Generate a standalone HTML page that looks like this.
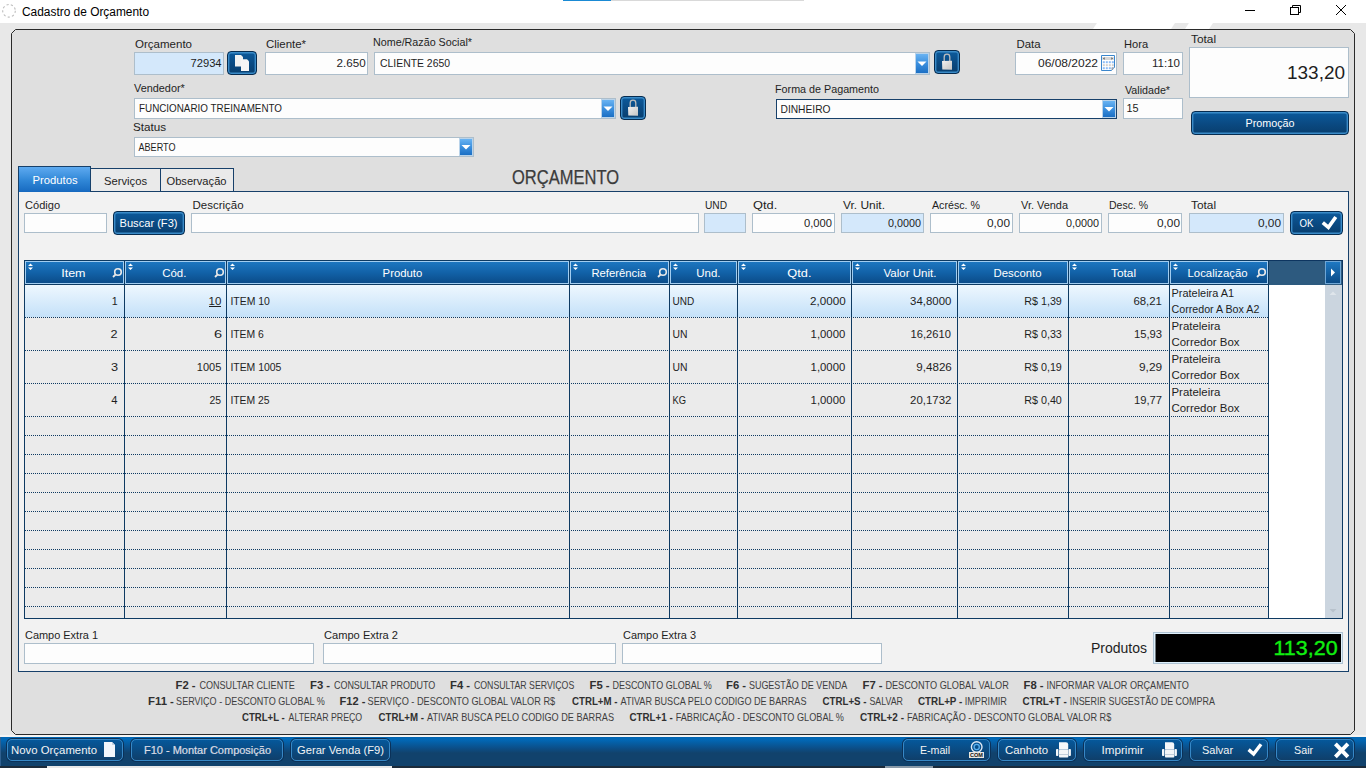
<!DOCTYPE html>
<html><head><meta charset="utf-8"><title>Cadastro de Orçamento</title>
<style>
html,body{margin:0;padding:0;width:1366px;height:768px;overflow:hidden;background:#e8e8e8;font-family:"Liberation Sans", sans-serif}
#s>div{position:absolute}
svg{position:absolute;left:0;top:0}
</style></head><body>
<div id="s">
<div style="left:0px;top:0px;width:1366px;height:23px;background:#ffffff"></div>
<div style="left:0px;top:23px;width:1366px;height:714px;background:#e8e8e8"></div>
<div style="left:1095px;top:23px;width:78px;height:6px;background:#fff;transform:skewX(-33deg)"></div>
<div style="left:1187px;top:23px;width:24px;height:6px;background:#fff;transform:skewX(-33deg)"></div>
<div style="left:563px;top:0px;width:48px;height:1px;background:#1a8ad4"></div>
<div style="left:611px;top:0px;width:193px;height:1px;background:#d9d9d9"></div>
<div style="left:0;top:0;width:1366px;height:768px"><svg width="1366" height="768" style="position:absolute;left:0;top:0"><path d="M11.5 33.5L15.5 29.5H1350.5L1354.5 33.5V730.5L1350.5 734.5H15.5L11.5 730.5Z" fill="#dfdfdf" stroke="#2a2a2a" stroke-width="1"/></svg></div>
<div style="left:134px;top:52px;width:90px;height:23px;background:#d4e8fb;border:1px solid #adbecb;box-sizing:border-box"></div>
<div style="left:227px;top:51px;width:30px;height:24px;background:linear-gradient(#0c5a9c,#0a487f 60%,#083e6e);border:1px solid #062c50;box-shadow:inset 0 0 0 1.4px #3a8bc8;border-radius:4px;box-sizing:border-box"></div>
<div style="left:265px;top:52px;width:103px;height:23px;background:#fdfdfd;border:1px solid #adbecb;box-sizing:border-box"></div>
<div style="left:374px;top:52px;width:556px;height:23px;background:#fdfdfd;border:1px solid #adbecb;box-sizing:border-box"></div>
<div style="left:915px;top:53px;width:14px;height:21px;background:linear-gradient(#69b3f2,#3b8fde 50%,#1b6fc4);border:1px solid #b9d3ea;box-sizing:border-box"></div>
<div style="left:934px;top:50px;width:26px;height:24px;background:linear-gradient(#0c5a9c,#0a487f 60%,#083e6e);border:1px solid #062c50;box-shadow:inset 0 0 0 1.4px #3a8bc8;border-radius:4px;box-sizing:border-box"></div>
<div style="left:1015px;top:52px;width:102px;height:23px;background:#fdfdfd;border:1px solid #adbecb;box-sizing:border-box"></div>
<div style="left:1123px;top:52px;width:60px;height:23px;background:#fdfdfd;border:1px solid #adbecb;box-sizing:border-box"></div>
<div style="left:1189px;top:47px;width:160px;height:51px;background:#fdfdfd;border:1px solid #adbecb;box-sizing:border-box"></div>
<div style="left:1191px;top:111px;width:158px;height:24px;background:linear-gradient(#0c5a9c,#0a487f 60%,#083e6e);border:1px solid #062c50;box-shadow:inset 0 0 0 1.4px #3a8bc8;border-radius:4px;box-sizing:border-box"></div>
<div style="left:134px;top:98px;width:482px;height:21px;background:#fdfdfd;border:1px solid #adbecb;box-sizing:border-box"></div>
<div style="left:601px;top:99px;width:14px;height:19px;background:linear-gradient(#69b3f2,#3b8fde 50%,#1b6fc4);border:1px solid #b9d3ea;box-sizing:border-box"></div>
<div style="left:620px;top:96px;width:26px;height:24px;background:linear-gradient(#0c5a9c,#0a487f 60%,#083e6e);border:1px solid #062c50;box-shadow:inset 0 0 0 1.4px #3a8bc8;border-radius:4px;box-sizing:border-box"></div>
<div style="left:776px;top:99px;width:341px;height:20px;background:#fdfdfd;border:1px solid #17406a;box-sizing:border-box"></div>
<div style="left:1102px;top:100px;width:14px;height:18px;background:linear-gradient(#69b3f2,#3b8fde 50%,#1b6fc4);border:1px solid #b9d3ea;box-sizing:border-box"></div>
<div style="left:1123px;top:98px;width:60px;height:21px;background:#fdfdfd;border:1px solid #adbecb;box-sizing:border-box"></div>
<div style="left:134px;top:137px;width:340px;height:20px;background:#fdfdfd;border:1px solid #adbecb;box-sizing:border-box"></div>
<div style="left:459px;top:138px;width:14px;height:18px;background:linear-gradient(#69b3f2,#3b8fde 50%,#1b6fc4);border:1px solid #b9d3ea;box-sizing:border-box"></div>
<div style="left:18px;top:191px;width:1331px;height:481px;background:#f2f2f2;border:1px solid #17406a;box-sizing:border-box"></div>
<div style="left:18px;top:166px;width:73px;height:26px;background:linear-gradient(#5eaaf0,#2f86d6 55%,#176ac0);border:1px solid #17406a;border-bottom:none;box-sizing:border-box"></div>
<div style="left:90px;top:168px;width:71px;height:24px;background:#eaeaea;border:1px solid #17406a;box-sizing:border-box"></div>
<div style="left:160px;top:168px;width:74px;height:24px;background:#eaeaea;border:1px solid #17406a;box-sizing:border-box"></div>
<div style="left:19px;top:191px;width:71px;height:1px;background:#176ac0"></div>
<div style="left:24px;top:213px;width:83px;height:20px;background:#fdfdfd;border:1px solid #adbecb;box-sizing:border-box"></div>
<div style="left:113px;top:211px;width:72px;height:24px;background:linear-gradient(#0c5a9c,#0a487f 60%,#083e6e);border:1px solid #062c50;box-shadow:inset 0 0 0 1.4px #3a8bc8;border-radius:4px;box-sizing:border-box"></div>
<div style="left:191px;top:213px;width:508px;height:20px;background:#fdfdfd;border:1px solid #adbecb;box-sizing:border-box"></div>
<div style="left:704px;top:213px;width:42px;height:20px;background:#d4e8fb;border:1px solid #adbecb;box-sizing:border-box"></div>
<div style="left:752px;top:213px;width:83px;height:20px;background:#fdfdfd;border:1px solid #adbecb;box-sizing:border-box"></div>
<div style="left:841px;top:213px;width:83px;height:20px;background:#d4e8fb;border:1px solid #adbecb;box-sizing:border-box"></div>
<div style="left:930px;top:213px;width:83px;height:20px;background:#fdfdfd;border:1px solid #adbecb;box-sizing:border-box"></div>
<div style="left:1019px;top:213px;width:83px;height:20px;background:#fdfdfd;border:1px solid #adbecb;box-sizing:border-box"></div>
<div style="left:1108px;top:213px;width:74px;height:20px;background:#fdfdfd;border:1px solid #adbecb;box-sizing:border-box"></div>
<div style="left:1189px;top:213px;width:95px;height:20px;background:#d4e8fb;border:1px solid #adbecb;box-sizing:border-box"></div>
<div style="left:1290px;top:211px;width:53px;height:24px;background:linear-gradient(#0c5a9c,#0a487f 60%,#083e6e);border:1px solid #062c50;box-shadow:inset 0 0 0 1.4px #3a8bc8;border-radius:4px;box-sizing:border-box"></div>
<div style="left:24px;top:260px;width:1319px;height:359px;background:#ebebeb;border:1px solid #0e3a62;box-sizing:border-box"></div>
<div style="left:24px;top:260px;width:1319px;height:25px;background:#2d5a7f;border:1px solid #0d3560;border-bottom:none;box-sizing:border-box"></div>
<div style="left:25px;top:285px;width:1243px;height:32px;background:linear-gradient(#eef7fe,#c4e1f9)"></div>
<div style="left:1269px;top:285px;width:56px;height:333px;background:#ffffff"></div>
<div style="left:1325px;top:285px;width:17px;height:333px;background:#cbd5df"></div>
<div style="left:25px;top:317px;width:1243px;height:0;border-top:1px dotted #0e3a62"></div>
<div style="left:25px;top:350px;width:1243px;height:0;border-top:1px dotted #0e3a62"></div>
<div style="left:25px;top:383px;width:1243px;height:0;border-top:1px dotted #0e3a62"></div>
<div style="left:25px;top:416px;width:1243px;height:0;border-top:1px dotted #0e3a62"></div>
<div style="left:25px;top:435px;width:1243px;height:0;border-top:1px dotted #0e3a62"></div>
<div style="left:25px;top:454px;width:1243px;height:0;border-top:1px dotted #0e3a62"></div>
<div style="left:25px;top:473px;width:1243px;height:0;border-top:1px dotted #0e3a62"></div>
<div style="left:25px;top:492px;width:1243px;height:0;border-top:1px dotted #0e3a62"></div>
<div style="left:25px;top:511px;width:1243px;height:0;border-top:1px dotted #0e3a62"></div>
<div style="left:25px;top:530px;width:1243px;height:0;border-top:1px dotted #0e3a62"></div>
<div style="left:25px;top:549px;width:1243px;height:0;border-top:1px dotted #0e3a62"></div>
<div style="left:25px;top:568px;width:1243px;height:0;border-top:1px dotted #0e3a62"></div>
<div style="left:25px;top:587px;width:1243px;height:0;border-top:1px dotted #0e3a62"></div>
<div style="left:25px;top:606px;width:1243px;height:0;border-top:1px dotted #0e3a62"></div>
<div style="left:124px;top:285px;width:1px;height:334px;background:#0e3a62"></div>
<div style="left:226px;top:285px;width:1px;height:334px;background:#0e3a62"></div>
<div style="left:569px;top:285px;width:1px;height:334px;background:#0e3a62"></div>
<div style="left:669px;top:285px;width:1px;height:334px;background:#0e3a62"></div>
<div style="left:737px;top:285px;width:1px;height:334px;background:#0e3a62"></div>
<div style="left:851px;top:285px;width:1px;height:334px;background:#0e3a62"></div>
<div style="left:957px;top:285px;width:1px;height:334px;background:#0e3a62"></div>
<div style="left:1068px;top:285px;width:1px;height:334px;background:#0e3a62"></div>
<div style="left:1169px;top:285px;width:1px;height:334px;background:#0e3a62"></div>
<div style="left:1268px;top:285px;width:1px;height:334px;background:#0e3a62"></div>
<div style="left:24px;top:260px;width:101px;height:25px;background:linear-gradient(#1e78c2,#1262a8 50%,#0a4a86);border:1px solid #0d3a62;box-shadow:inset 0 0 0 1px #a2cdf0;box-sizing:border-box"></div>
<div style="left:124px;top:260px;width:103px;height:25px;background:linear-gradient(#1e78c2,#1262a8 50%,#0a4a86);border:1px solid #0d3a62;box-shadow:inset 0 0 0 1px #a2cdf0;box-sizing:border-box"></div>
<div style="left:226px;top:260px;width:344px;height:25px;background:linear-gradient(#1e78c2,#1262a8 50%,#0a4a86);border:1px solid #0d3a62;box-shadow:inset 0 0 0 1px #a2cdf0;box-sizing:border-box"></div>
<div style="left:569px;top:260px;width:101px;height:25px;background:linear-gradient(#1e78c2,#1262a8 50%,#0a4a86);border:1px solid #0d3a62;box-shadow:inset 0 0 0 1px #a2cdf0;box-sizing:border-box"></div>
<div style="left:669px;top:260px;width:69px;height:25px;background:linear-gradient(#1e78c2,#1262a8 50%,#0a4a86);border:1px solid #0d3a62;box-shadow:inset 0 0 0 1px #a2cdf0;box-sizing:border-box"></div>
<div style="left:737px;top:260px;width:115px;height:25px;background:linear-gradient(#1e78c2,#1262a8 50%,#0a4a86);border:1px solid #0d3a62;box-shadow:inset 0 0 0 1px #a2cdf0;box-sizing:border-box"></div>
<div style="left:851px;top:260px;width:107px;height:25px;background:linear-gradient(#1e78c2,#1262a8 50%,#0a4a86);border:1px solid #0d3a62;box-shadow:inset 0 0 0 1px #a2cdf0;box-sizing:border-box"></div>
<div style="left:957px;top:260px;width:112px;height:25px;background:linear-gradient(#1e78c2,#1262a8 50%,#0a4a86);border:1px solid #0d3a62;box-shadow:inset 0 0 0 1px #a2cdf0;box-sizing:border-box"></div>
<div style="left:1068px;top:260px;width:102px;height:25px;background:linear-gradient(#1e78c2,#1262a8 50%,#0a4a86);border:1px solid #0d3a62;box-shadow:inset 0 0 0 1px #a2cdf0;box-sizing:border-box"></div>
<div style="left:1169px;top:260px;width:100px;height:25px;background:linear-gradient(#1e78c2,#1262a8 50%,#0a4a86);border:1px solid #0d3a62;box-shadow:inset 0 0 0 1px #a2cdf0;box-sizing:border-box"></div>
<div style="left:1325px;top:261px;width:16px;height:23px;background:linear-gradient(#1e78c2,#0a4a86);border:1px solid #6ea6d6;box-sizing:border-box"></div>
<div style="left:24px;top:643px;width:290px;height:21px;background:#fdfdfd;border:1px solid #adbecb;box-sizing:border-box"></div>
<div style="left:323px;top:643px;width:293px;height:21px;background:#fdfdfd;border:1px solid #adbecb;box-sizing:border-box"></div>
<div style="left:622px;top:643px;width:260px;height:21px;background:#fdfdfd;border:1px solid #adbecb;box-sizing:border-box"></div>
<div style="left:1153px;top:632px;width:190px;height:32px;background:#000;border:1px solid #afc3d3;box-shadow:inset 1.5px 1px 0 0 #def0fc,inset -1px -1px 0 0 #def0fc;box-sizing:border-box"></div>
<div style="left:0px;top:735px;width:1366px;height:2px;background:#f4f4f4"></div>
<div style="left:0px;top:737px;width:1366px;height:29px;background:linear-gradient(#0267b4 0px,#0267b4 3px,#0b4f89 11px,#11426c 16px,#11426c 29px)"></div>
<div style="left:0px;top:766px;width:1366px;height:2px;background:#1c2b3a"></div>
<div style="left:0px;top:737px;width:1px;height:29px;background:#2f6090"></div>
<div style="left:47px;top:766px;width:345px;height:2px;background:#e8e8e8"></div>
<div style="left:885px;top:766px;width:48px;height:2px;background:#8a9aa8"></div>
<div style="left:7px;top:739px;width:116px;height:22px;background:linear-gradient(#05589b,#0a4c84 45%,#0f3f6a);border:1px solid #3788c6;box-shadow:0 0 0 1px #0b3158;border-radius:5px;box-sizing:border-box"></div>
<div style="left:131px;top:739px;width:152px;height:22px;background:linear-gradient(#05589b,#0a4c84 45%,#0f3f6a);border:1px solid #3788c6;box-shadow:0 0 0 1px #0b3158;border-radius:5px;box-sizing:border-box"></div>
<div style="left:291px;top:739px;width:99px;height:22px;background:linear-gradient(#05589b,#0a4c84 45%,#0f3f6a);border:1px solid #3788c6;box-shadow:0 0 0 1px #0b3158;border-radius:5px;box-sizing:border-box"></div>
<div style="left:903px;top:739px;width:87px;height:22px;background:linear-gradient(#05589b,#0a4c84 45%,#0f3f6a);border:1px solid #3788c6;box-shadow:0 0 0 1px #0b3158;border-radius:5px;box-sizing:border-box"></div>
<div style="left:998px;top:739px;width:78px;height:22px;background:linear-gradient(#05589b,#0a4c84 45%,#0f3f6a);border:1px solid #3788c6;box-shadow:0 0 0 1px #0b3158;border-radius:5px;box-sizing:border-box"></div>
<div style="left:1084px;top:739px;width:98px;height:22px;background:linear-gradient(#05589b,#0a4c84 45%,#0f3f6a);border:1px solid #3788c6;box-shadow:0 0 0 1px #0b3158;border-radius:5px;box-sizing:border-box"></div>
<div style="left:1190px;top:739px;width:78px;height:22px;background:linear-gradient(#05589b,#0a4c84 45%,#0f3f6a);border:1px solid #3788c6;box-shadow:0 0 0 1px #0b3158;border-radius:5px;box-sizing:border-box"></div>
<div style="left:1276px;top:739px;width:78px;height:22px;background:linear-gradient(#05589b,#0a4c84 45%,#0f3f6a);border:1px solid #3788c6;box-shadow:0 0 0 1px #0b3158;border-radius:5px;box-sizing:border-box"></div>
</div>
<svg width="1366" height="768" viewBox="0 0 1366 768" font-family='"Liberation Sans", sans-serif'>
<defs><linearGradient id="lockg" x1="0" y1="0" x2="1" y2="1"><stop offset="0" stop-color="#f0f0f0"/><stop offset="1" stop-color="#c4c4c4"/></linearGradient></defs>
<circle cx="9" cy="10.8" r="6.3" fill="none" stroke="#bdbdbd" stroke-width="1.1" stroke-dasharray="2.2 2.2"/>
<path d="M1245 10.5H1255" stroke="#000" stroke-width="1"/>
<rect x="1290.5" y="7.5" width="8" height="7" fill="none" stroke="#000"/>
<path d="M1292.5 7.5V5.5H1300.5V12.5H1298.5" fill="none" stroke="#000"/>
<path d="M1336 5L1346 15M1346 5L1336 15" stroke="#000" stroke-width="1"/>
<path d="M235 55h6l2 2v9.5h-8z" fill="#f2f2f2"/><path d="M241 59.3h6l2 2v9.6h-8z" fill="#f6f6f6"/>
<path d="M917.5 61.5L926.5 61.5L922.0 66.0Z" fill="#fff"/>
<path d="M944.2 61.5V57a2.8 2.8 0 0 1 5.6 0V61.5" fill="none" stroke="#bdbdbd" stroke-width="1.3"/>
<path d="M942 61L952 60.8V69.8L942.3 69.5Z" fill="url(#lockg)"/>
<path d="M1101.5 55.5H1114.5V67.5L1111.5 70.5H1101.5Z" fill="#fff" stroke="#3a86cc" stroke-width="1"/>
<rect x="1102.2" y="57" width="11.6" height="3" fill="#d6d6d6"/><path d="M1103 58.5L1104.6 57.2V59.8Z" fill="#555"/><path d="M1113 58.5L1111.4 57.2V59.8Z" fill="#555"/>
<rect x="1102.8" y="61.2" width="2" height="2" fill="#8cbcf6"/>
<rect x="1105.8" y="61.2" width="2" height="2" fill="#8cbcf6"/>
<rect x="1108.8" y="61.2" width="2" height="2" fill="#8cbcf6"/>
<rect x="1111.8" y="61.2" width="2" height="2" fill="#8cbcf6"/>
<rect x="1102.8" y="64.2" width="2" height="2" fill="#d0d0d0"/>
<rect x="1105.8" y="64.2" width="2" height="2" fill="#d0d0d0"/>
<rect x="1108.8" y="64.2" width="2" height="2" fill="#d0d0d0"/>
<rect x="1111.8" y="64.2" width="2" height="2" fill="#d0d0d0"/>
<rect x="1102.8" y="67.2" width="2" height="2" fill="#8cbcf6"/>
<rect x="1105.8" y="67.2" width="2" height="2" fill="#8cbcf6"/>
<rect x="1108.8" y="67.2" width="2" height="2" fill="#8cbcf6"/>
<rect x="1111.8" y="67.2" width="2" height="2" fill="#8cbcf6"/>
<path d="M1114.5 67.5L1111.5 70.5V67.5Z" fill="#a8a8a8"/>
<path d="M603.5 106.5L612.5 106.5L608.0 111.0Z" fill="#fff"/>
<path d="M630.2 107.5V103a2.8 2.8 0 0 1 5.6 0V107.5" fill="none" stroke="#bdbdbd" stroke-width="1.3"/>
<path d="M628 107L638 106.8V115.8L628.3 115.5Z" fill="url(#lockg)"/>
<path d="M1104.5 107.0L1113.5 107.0L1109.0 111.5Z" fill="#fff"/>
<path d="M461.5 145.0L470.5 145.0L466.0 149.5Z" fill="#fff"/>
<path d="M1322.8 222.6L1328.4 227.4L1335.8 217" fill="none" stroke="#fff" stroke-width="3.6"/>
<path d="M1329.5 295L1333 291.5L1336.5 295Z" fill="#dfe5eb"/>
<path d="M1329.5 609L1333 612.5L1336.5 609Z" fill="#b8c2cc"/>
<path d="M28 266L30.5 263.5L33 266ZM28 267.5L30.5 270L33 267.5Z" fill="#ffffff"/>
<circle cx="118" cy="272" r="3.3" fill="none" stroke="#e8e8e8" stroke-width="1.6"/><path d="M115.7 274.3L113 277" stroke="#e8e8e8" stroke-width="1.8"/>
<path d="M128 266L130.5 263.5L133 266ZM128 267.5L130.5 270L133 267.5Z" fill="#ffffff"/>
<circle cx="220" cy="272" r="3.3" fill="none" stroke="#e8e8e8" stroke-width="1.6"/><path d="M217.7 274.3L215 277" stroke="#e8e8e8" stroke-width="1.8"/>
<path d="M230 266L232.5 263.5L235 266ZM230 267.5L232.5 270L235 267.5Z" fill="#ffffff"/>
<path d="M573 266L575.5 263.5L578 266ZM573 267.5L575.5 270L578 267.5Z" fill="#ffffff"/>
<circle cx="663" cy="272" r="3.3" fill="none" stroke="#e8e8e8" stroke-width="1.6"/><path d="M660.7 274.3L658 277" stroke="#e8e8e8" stroke-width="1.8"/>
<path d="M673 266L675.5 263.5L678 266ZM673 267.5L675.5 270L678 267.5Z" fill="#ffffff"/>
<path d="M741 266L743.5 263.5L746 266ZM741 267.5L743.5 270L746 267.5Z" fill="#ffffff"/>
<path d="M855 266L857.5 263.5L860 266ZM855 267.5L857.5 270L860 267.5Z" fill="#ffffff"/>
<path d="M961 266L963.5 263.5L966 266ZM961 267.5L963.5 270L966 267.5Z" fill="#ffffff"/>
<path d="M1072 266L1074.5 263.5L1077 266ZM1072 267.5L1074.5 270L1077 267.5Z" fill="#ffffff"/>
<path d="M1173 266L1175.5 263.5L1178 266ZM1173 267.5L1175.5 270L1178 267.5Z" fill="#ffffff"/>
<circle cx="1262" cy="272" r="3.3" fill="none" stroke="#e8e8e8" stroke-width="1.6"/><path d="M1259.7 274.3L1257 277" stroke="#e8e8e8" stroke-width="1.8"/>
<path d="M1331 268.5L1335 272.5L1331 276.5Z" fill="#ffffff"/>
<path d="M209 306.5H221" stroke="#1e1e1e" stroke-width="1"/>
<path d="M104 742h8l3 3v12h-11z" fill="#f2f6fb"/><path d="M112 742v3h3" fill="#c7d4e2"/>
<circle cx="976.7" cy="747" r="5.3" fill="none" stroke="#dfe8f3" stroke-width="1.4"/><circle cx="976.7" cy="747" r="2.6" fill="none" stroke="#5ab0f0" stroke-width="1.3"/><rect x="969" y="752" width="15" height="6" fill="#ebe7e3"/><text x="976.5" y="757.4" font-size="6" font-weight="bold" fill="#111" text-anchor="middle" textLength="13" lengthAdjust="spacingAndGlyphs">COM</text>
<path d="M1059 742.2h7a2.2 2.2 0 0 1 2.2 2.2V749.5h-9.2z" fill="#f6f8fa"/><rect x="1056" y="749" width="2.4" height="7" rx="0.8" fill="#f6f8fa"/><rect x="1068.5" y="749" width="2.4" height="7" rx="0.8" fill="#f6f8fa"/><rect x="1059" y="749.6" width="9.3" height="8" rx="0.8" fill="#f4f6f8"/><rect x="1059" y="754" width="9.3" height="1" fill="#c3cfdb"/>
<path d="M1165 742.2h7a2.2 2.2 0 0 1 2.2 2.2V749.5h-9.2z" fill="#f6f8fa"/><rect x="1162" y="749" width="2.4" height="7" rx="0.8" fill="#f6f8fa"/><rect x="1174.5" y="749" width="2.4" height="7" rx="0.8" fill="#f6f8fa"/><rect x="1165" y="749.6" width="9.3" height="8" rx="0.8" fill="#f4f6f8"/><rect x="1165" y="754" width="9.3" height="1" fill="#c3cfdb"/>
<path d="M1248.6 749.6L1253.6 754L1261 744.3" fill="none" stroke="#fff" stroke-width="3.4"/>
<path d="M1335.4 743.8L1347.9 756.8M1347.9 743.8L1335.4 756.8" stroke="#fff" stroke-width="3.9"/>
<text x="22.00" y="16" font-size="12" fill="#000" textLength="127.02" lengthAdjust="spacingAndGlyphs">Cadastro de Orçamento</text>
<text x="135.00" y="48" font-size="11" fill="#1e1e1e" textLength="57.02" lengthAdjust="spacingAndGlyphs">Orçamento</text>
<text x="190.50" y="67" font-size="11" fill="#1e1e1e" textLength="31.09" lengthAdjust="spacingAndGlyphs">72934</text>
<text x="266.00" y="48" font-size="11" fill="#1e1e1e" textLength="40.03" lengthAdjust="spacingAndGlyphs">Cliente*</text>
<text x="336.50" y="67" font-size="11" fill="#1e1e1e" textLength="29.10" lengthAdjust="spacingAndGlyphs">2.650</text>
<text x="373.00" y="46" font-size="11" fill="#1e1e1e" textLength="99.03" lengthAdjust="spacingAndGlyphs">Nome/Razão Social*</text>
<text x="380.00" y="67" font-size="11" fill="#1e1e1e" textLength="70.01" lengthAdjust="spacingAndGlyphs">CLIENTE 2650</text>
<text x="1016.50" y="48" font-size="11" fill="#1e1e1e" textLength="24.05" lengthAdjust="spacingAndGlyphs">Data</text>
<text x="1038.00" y="67" font-size="11" fill="#1e1e1e" textLength="60.02" lengthAdjust="spacingAndGlyphs">06/08/2022</text>
<text x="1124.00" y="48" font-size="11" fill="#1e1e1e" textLength="24.07" lengthAdjust="spacingAndGlyphs">Hora</text>
<text x="1152.00" y="67" font-size="11" fill="#1e1e1e" textLength="28.04" lengthAdjust="spacingAndGlyphs">11:10</text>
<text x="1191.00" y="43" font-size="11" fill="#1e1e1e" textLength="25.09" lengthAdjust="spacingAndGlyphs">Total</text>
<text x="1287.00" y="78.7" font-size="19" fill="#1e1e1e" textLength="58.07" lengthAdjust="spacingAndGlyphs">133,20</text>
<text x="1245.50" y="127" font-size="11" fill="#ffffff" textLength="49.05" lengthAdjust="spacingAndGlyphs">Promoção</text>
<text x="134.00" y="92" font-size="11" fill="#1e1e1e" textLength="50.81" lengthAdjust="spacingAndGlyphs">Vendedor*</text>
<text x="139.00" y="112" font-size="11" fill="#1e1e1e" textLength="143.02" lengthAdjust="spacingAndGlyphs">FUNCIONARIO TREINAMENTO</text>
<text x="775.00" y="93" font-size="11" fill="#1e1e1e" textLength="104.01" lengthAdjust="spacingAndGlyphs">Forma de Pagamento</text>
<text x="780.50" y="113" font-size="11" fill="#1e1e1e" textLength="50.02" lengthAdjust="spacingAndGlyphs">DINHEIRO</text>
<text x="1125.00" y="94" font-size="11" fill="#1e1e1e" textLength="45.00" lengthAdjust="spacingAndGlyphs">Validade*</text>
<text x="1126.50" y="112" font-size="11" fill="#1e1e1e" textLength="12.10" lengthAdjust="spacingAndGlyphs">15</text>
<text x="133.00" y="131" font-size="11" fill="#1e1e1e" textLength="33.08" lengthAdjust="spacingAndGlyphs">Status</text>
<text x="138.50" y="151" font-size="11" fill="#1e1e1e" textLength="37.01" lengthAdjust="spacingAndGlyphs">ABERTO</text>
<text x="512.00" y="183.5" font-size="19.5" fill="#3c3c3c" stroke="#3c3c3c" stroke-width="0.25" textLength="107.04" lengthAdjust="spacingAndGlyphs">ORÇAMENTO</text>
<text x="32.50" y="184" font-size="11" fill="#ffffff" textLength="45.06" lengthAdjust="spacingAndGlyphs">Produtos</text>
<text x="104.00" y="185" font-size="11" fill="#1e1e1e" textLength="43.02" lengthAdjust="spacingAndGlyphs">Serviços</text>
<text x="166.50" y="185" font-size="11" fill="#1e1e1e" textLength="60.01" lengthAdjust="spacingAndGlyphs">Observação</text>
<text x="25.00" y="209" font-size="11" fill="#1e1e1e" textLength="35.03" lengthAdjust="spacingAndGlyphs">Código</text>
<text x="119.50" y="227" font-size="11" fill="#ffffff" textLength="58.05" lengthAdjust="spacingAndGlyphs">Buscar (F3)</text>
<text x="192.50" y="209" font-size="11" fill="#1e1e1e" textLength="51.05" lengthAdjust="spacingAndGlyphs">Descrição</text>
<text x="705.00" y="209" font-size="11" fill="#1e1e1e" textLength="22.05" lengthAdjust="spacingAndGlyphs">UND</text>
<text x="753.00" y="209" font-size="11" fill="#1e1e1e" textLength="24.20" lengthAdjust="spacingAndGlyphs">Qtd.</text>
<text x="804.00" y="226.5" font-size="11" fill="#1e1e1e" textLength="28.00" lengthAdjust="spacingAndGlyphs">0,000</text>
<text x="843.00" y="209" font-size="11" fill="#1e1e1e" textLength="42.01" lengthAdjust="spacingAndGlyphs">Vr. Unit.</text>
<text x="888.00" y="226.5" font-size="11" fill="#1e1e1e" textLength="33.00" lengthAdjust="spacingAndGlyphs">0,0000</text>
<text x="932.00" y="209" font-size="11" fill="#1e1e1e" textLength="48.00" lengthAdjust="spacingAndGlyphs">Acrésc. %</text>
<text x="987.00" y="226.5" font-size="11" fill="#1e1e1e" textLength="23.02" lengthAdjust="spacingAndGlyphs">0,00</text>
<text x="1021.00" y="209" font-size="11" fill="#1e1e1e" textLength="47.01" lengthAdjust="spacingAndGlyphs">Vr. Venda</text>
<text x="1066.00" y="226.5" font-size="11" fill="#1e1e1e" textLength="33.02" lengthAdjust="spacingAndGlyphs">0,0000</text>
<text x="1109.00" y="209" font-size="11" fill="#1e1e1e" textLength="39.07" lengthAdjust="spacingAndGlyphs">Desc. %</text>
<text x="1157.00" y="226.5" font-size="11" fill="#1e1e1e" textLength="23.02" lengthAdjust="spacingAndGlyphs">0,00</text>
<text x="1191.00" y="209" font-size="11" fill="#1e1e1e" textLength="25.09" lengthAdjust="spacingAndGlyphs">Total</text>
<text x="1258.00" y="226.5" font-size="11" fill="#1e1e1e" textLength="23.02" lengthAdjust="spacingAndGlyphs">0,00</text>
<text x="1299.50" y="227" font-size="11" fill="#ffffff" textLength="14.00" lengthAdjust="spacingAndGlyphs">OK</text>
<text x="61.20" y="277" font-size="11" fill="#ffffff" textLength="24.33" lengthAdjust="spacingAndGlyphs">Item</text>
<text x="162.20" y="277" font-size="11" fill="#ffffff" textLength="24.20" lengthAdjust="spacingAndGlyphs">Cód.</text>
<text x="382.60" y="277" font-size="11" fill="#ffffff" textLength="39.65" lengthAdjust="spacingAndGlyphs">Produto</text>
<text x="591.40" y="277" font-size="11" fill="#ffffff" textLength="54.64" lengthAdjust="spacingAndGlyphs">Referência</text>
<text x="696.30" y="277" font-size="11" fill="#ffffff" textLength="24.20" lengthAdjust="spacingAndGlyphs">Und.</text>
<text x="787.30" y="277" font-size="11" fill="#ffffff" textLength="24.20" lengthAdjust="spacingAndGlyphs">Qtd.</text>
<text x="883.50" y="277" font-size="11" fill="#ffffff" textLength="53.02" lengthAdjust="spacingAndGlyphs">Valor Unit.</text>
<text x="993.50" y="277" font-size="11" fill="#ffffff" textLength="48.06" lengthAdjust="spacingAndGlyphs">Desconto</text>
<text x="1111.00" y="277" font-size="11" fill="#ffffff" textLength="25.09" lengthAdjust="spacingAndGlyphs">Total</text>
<text x="1187.50" y="277" font-size="11" fill="#ffffff" textLength="60.04" lengthAdjust="spacingAndGlyphs">Localização</text>
<text x="111.70" y="305" font-size="11" fill="#1e1e1e" textLength="5.97" lengthAdjust="spacingAndGlyphs">1</text>
<text x="208.50" y="305" font-size="11" fill="#1e1e1e" textLength="12.80" lengthAdjust="spacingAndGlyphs">10</text>
<text x="230.40" y="305" font-size="11" fill="#1e1e1e" textLength="39.45" lengthAdjust="spacingAndGlyphs">ITEM 10</text>
<text x="672.60" y="305" font-size="11" fill="#1e1e1e" textLength="21.70" lengthAdjust="spacingAndGlyphs">UND</text>
<text x="810.10" y="305" font-size="11" fill="#1e1e1e" textLength="35.67" lengthAdjust="spacingAndGlyphs">2,0000</text>
<text x="910.10" y="305" font-size="11" fill="#1e1e1e" textLength="41.24" lengthAdjust="spacingAndGlyphs">34,8000</text>
<text x="1024.20" y="305" font-size="11" fill="#1e1e1e" textLength="37.66" lengthAdjust="spacingAndGlyphs">R$ 1,39</text>
<text x="1133.40" y="305" font-size="11" fill="#1e1e1e" textLength="28.53" lengthAdjust="spacingAndGlyphs">68,21</text>
<text x="1171.50" y="297" font-size="11" fill="#1e1e1e" textLength="62.66" lengthAdjust="spacingAndGlyphs">Prateleira A1</text>
<text x="1171.50" y="312.5" font-size="11" fill="#1e1e1e" textLength="87.83" lengthAdjust="spacingAndGlyphs">Corredor A Box A2</text>
<text x="110.60" y="338" font-size="11" fill="#1e1e1e" textLength="7.04" lengthAdjust="spacingAndGlyphs">2</text>
<text x="214.00" y="338" font-size="11" fill="#1e1e1e" textLength="8.08" lengthAdjust="spacingAndGlyphs">6</text>
<text x="230.40" y="338" font-size="11" fill="#1e1e1e" textLength="33.46" lengthAdjust="spacingAndGlyphs">ITEM 6</text>
<text x="672.60" y="338" font-size="11" fill="#1e1e1e" textLength="14.97" lengthAdjust="spacingAndGlyphs">UN</text>
<text x="810.60" y="338" font-size="11" fill="#1e1e1e" textLength="34.66" lengthAdjust="spacingAndGlyphs">1,0000</text>
<text x="910.60" y="338" font-size="11" fill="#1e1e1e" textLength="40.24" lengthAdjust="spacingAndGlyphs">16,2610</text>
<text x="1024.20" y="338" font-size="11" fill="#1e1e1e" textLength="37.66" lengthAdjust="spacingAndGlyphs">R$ 0,33</text>
<text x="1134.00" y="338" font-size="11" fill="#1e1e1e" textLength="28.10" lengthAdjust="spacingAndGlyphs">15,93</text>
<text x="1171.50" y="330" font-size="11" fill="#1e1e1e" textLength="48.83" lengthAdjust="spacingAndGlyphs">Prateleira</text>
<text x="1171.50" y="345.5" font-size="11" fill="#1e1e1e" textLength="68.04" lengthAdjust="spacingAndGlyphs">Corredor Box</text>
<text x="110.90" y="371" font-size="11" fill="#1e1e1e" textLength="7.09" lengthAdjust="spacingAndGlyphs">3</text>
<text x="196.80" y="371" font-size="11" fill="#1e1e1e" textLength="24.47" lengthAdjust="spacingAndGlyphs">1005</text>
<text x="230.40" y="371" font-size="11" fill="#1e1e1e" textLength="51.02" lengthAdjust="spacingAndGlyphs">ITEM 1005</text>
<text x="672.60" y="371" font-size="11" fill="#1e1e1e" textLength="14.97" lengthAdjust="spacingAndGlyphs">UN</text>
<text x="810.60" y="371" font-size="11" fill="#1e1e1e" textLength="34.66" lengthAdjust="spacingAndGlyphs">1,0000</text>
<text x="916.30" y="371" font-size="11" fill="#1e1e1e" textLength="35.50" lengthAdjust="spacingAndGlyphs">9,4826</text>
<text x="1024.20" y="371" font-size="11" fill="#1e1e1e" textLength="37.66" lengthAdjust="spacingAndGlyphs">R$ 0,19</text>
<text x="1139.00" y="371" font-size="11" fill="#1e1e1e" textLength="23.13" lengthAdjust="spacingAndGlyphs">9,29</text>
<text x="1171.50" y="363" font-size="11" fill="#1e1e1e" textLength="48.83" lengthAdjust="spacingAndGlyphs">Prateleira</text>
<text x="1171.50" y="378.5" font-size="11" fill="#1e1e1e" textLength="68.04" lengthAdjust="spacingAndGlyphs">Corredor Box</text>
<text x="111.20" y="404" font-size="11" fill="#1e1e1e" textLength="6.25" lengthAdjust="spacingAndGlyphs">4</text>
<text x="209.50" y="404" font-size="11" fill="#1e1e1e" textLength="11.63" lengthAdjust="spacingAndGlyphs">25</text>
<text x="230.40" y="404" font-size="11" fill="#1e1e1e" textLength="39.24" lengthAdjust="spacingAndGlyphs">ITEM 25</text>
<text x="672.60" y="404" font-size="11" fill="#1e1e1e" textLength="13.53" lengthAdjust="spacingAndGlyphs">KG</text>
<text x="810.60" y="404" font-size="11" fill="#1e1e1e" textLength="34.66" lengthAdjust="spacingAndGlyphs">1,0000</text>
<text x="910.10" y="404" font-size="11" fill="#1e1e1e" textLength="41.27" lengthAdjust="spacingAndGlyphs">20,1732</text>
<text x="1024.20" y="404" font-size="11" fill="#1e1e1e" textLength="37.66" lengthAdjust="spacingAndGlyphs">R$ 0,40</text>
<text x="1134.00" y="404" font-size="11" fill="#1e1e1e" textLength="28.10" lengthAdjust="spacingAndGlyphs">19,77</text>
<text x="1171.50" y="396" font-size="11" fill="#1e1e1e" textLength="48.83" lengthAdjust="spacingAndGlyphs">Prateleira</text>
<text x="1171.50" y="411.5" font-size="11" fill="#1e1e1e" textLength="68.04" lengthAdjust="spacingAndGlyphs">Corredor Box</text>
<text x="25.00" y="639" font-size="11" fill="#1e1e1e" textLength="73.01" lengthAdjust="spacingAndGlyphs">Campo Extra 1</text>
<text x="324.00" y="639" font-size="11" fill="#1e1e1e" textLength="74.06" lengthAdjust="spacingAndGlyphs">Campo Extra 2</text>
<text x="623.00" y="639" font-size="11" fill="#1e1e1e" textLength="73.01" lengthAdjust="spacingAndGlyphs">Campo Extra 3</text>
<text x="1091.00" y="653" font-size="14" fill="#1e1e1e" textLength="56.02" lengthAdjust="spacingAndGlyphs">Produtos</text>
<text x="1273.50" y="655" font-size="19.5" fill="#10ee10" stroke="#10ee10" stroke-width="0.35" textLength="64.11" lengthAdjust="spacingAndGlyphs">113,20</text>
<text x="175.50" y="688.8" font-size="11" fill="#303030" font-weight="bold" textLength="20.06" lengthAdjust="spacingAndGlyphs">F2 -</text>
<text x="199.40" y="688.8" font-size="11" fill="#3e3e3e" textLength="95.41" lengthAdjust="spacingAndGlyphs">CONSULTAR CLIENTE</text>
<text x="310.00" y="688.8" font-size="11" fill="#303030" font-weight="bold" textLength="20.06" lengthAdjust="spacingAndGlyphs">F3 -</text>
<text x="333.90" y="688.8" font-size="11" fill="#3e3e3e" textLength="101.40" lengthAdjust="spacingAndGlyphs">CONSULTAR PRODUTO</text>
<text x="450.00" y="688.8" font-size="11" fill="#303030" font-weight="bold" textLength="20.06" lengthAdjust="spacingAndGlyphs">F4 -</text>
<text x="473.90" y="688.8" font-size="11" fill="#3e3e3e" textLength="100.40" lengthAdjust="spacingAndGlyphs">CONSULTAR SERVIÇOS</text>
<text x="589.50" y="688.8" font-size="11" fill="#303030" font-weight="bold" textLength="20.06" lengthAdjust="spacingAndGlyphs">F5 -</text>
<text x="612.40" y="688.8" font-size="11" fill="#3e3e3e" textLength="99.43" lengthAdjust="spacingAndGlyphs">DESCONTO GLOBAL %</text>
<text x="726.00" y="688.8" font-size="11" fill="#303030" font-weight="bold" textLength="20.06" lengthAdjust="spacingAndGlyphs">F6 -</text>
<text x="748.90" y="688.8" font-size="11" fill="#3e3e3e" textLength="98.41" lengthAdjust="spacingAndGlyphs">SUGESTÃO DE VENDA</text>
<text x="862.50" y="688.8" font-size="11" fill="#303030" font-weight="bold" textLength="20.06" lengthAdjust="spacingAndGlyphs">F7 -</text>
<text x="885.40" y="688.8" font-size="11" fill="#3e3e3e" textLength="123.43" lengthAdjust="spacingAndGlyphs">DESCONTO GLOBAL VALOR</text>
<text x="1023.50" y="688.8" font-size="11" fill="#303030" font-weight="bold" textLength="20.06" lengthAdjust="spacingAndGlyphs">F8 -</text>
<text x="1046.40" y="688.8" font-size="11" fill="#3e3e3e" textLength="142.41" lengthAdjust="spacingAndGlyphs">INFORMAR VALOR ORÇAMENTO</text>
<text x="148.00" y="704.8" font-size="11" fill="#303030" font-weight="bold" textLength="25.89" lengthAdjust="spacingAndGlyphs">F11 -</text>
<text x="176.10" y="704.8" font-size="11" fill="#3e3e3e" textLength="148.60" lengthAdjust="spacingAndGlyphs">SERVIÇO - DESCONTO GLOBAL %</text>
<text x="339.50" y="704.8" font-size="11" fill="#303030" font-weight="bold" textLength="25.89" lengthAdjust="spacingAndGlyphs">F12 -</text>
<text x="367.60" y="704.8" font-size="11" fill="#3e3e3e" textLength="187.60" lengthAdjust="spacingAndGlyphs">SERVIÇO - DESCONTO GLOBAL VALOR R$</text>
<text x="572.00" y="704.8" font-size="11" fill="#303030" font-weight="bold" textLength="45.42" lengthAdjust="spacingAndGlyphs">CTRL+M -</text>
<text x="620.50" y="704.8" font-size="11" fill="#3e3e3e" textLength="186.00" lengthAdjust="spacingAndGlyphs">ATIVAR BUSCA PELO CODIGO DE BARRAS</text>
<text x="822.50" y="704.8" font-size="11" fill="#303030" font-weight="bold" textLength="44.00" lengthAdjust="spacingAndGlyphs">CTRL+S -</text>
<text x="869.40" y="704.8" font-size="11" fill="#3e3e3e" textLength="33.51" lengthAdjust="spacingAndGlyphs">SALVAR</text>
<text x="918.00" y="704.8" font-size="11" fill="#303030" font-weight="bold" textLength="44.21" lengthAdjust="spacingAndGlyphs">CTRL+P -</text>
<text x="964.70" y="704.8" font-size="11" fill="#3e3e3e" textLength="42.27" lengthAdjust="spacingAndGlyphs">IMPRIMIR</text>
<text x="1022.50" y="704.8" font-size="11" fill="#303030" font-weight="bold" textLength="44.21" lengthAdjust="spacingAndGlyphs">CTRL+T -</text>
<text x="1069.70" y="704.8" font-size="11" fill="#3e3e3e" textLength="145.21" lengthAdjust="spacingAndGlyphs">INSERIR SUGESTÃO DE COMPRA</text>
<text x="242.00" y="720.8" font-size="11" fill="#303030" font-weight="bold" textLength="42.81" lengthAdjust="spacingAndGlyphs">CTRL+L -</text>
<text x="288.60" y="720.8" font-size="11" fill="#3e3e3e" textLength="73.60" lengthAdjust="spacingAndGlyphs">ALTERAR PREÇO</text>
<text x="378.50" y="720.8" font-size="11" fill="#303030" font-weight="bold" textLength="45.42" lengthAdjust="spacingAndGlyphs">CTRL+M -</text>
<text x="427.00" y="720.8" font-size="11" fill="#3e3e3e" textLength="187.00" lengthAdjust="spacingAndGlyphs">ATIVAR BUSCA PELO CODIGO DE BARRAS</text>
<text x="629.50" y="720.8" font-size="11" fill="#303030" font-weight="bold" textLength="43.21" lengthAdjust="spacingAndGlyphs">CTRL+1 -</text>
<text x="675.70" y="720.8" font-size="11" fill="#3e3e3e" textLength="168.21" lengthAdjust="spacingAndGlyphs">FABRICAÇÃO - DESCONTO GLOBAL %</text>
<text x="860.00" y="720.8" font-size="11" fill="#303030" font-weight="bold" textLength="44.00" lengthAdjust="spacingAndGlyphs">CTRL+2 -</text>
<text x="906.90" y="720.8" font-size="11" fill="#3e3e3e" textLength="204.40" lengthAdjust="spacingAndGlyphs">FABRICAÇÃO - DESCONTO GLOBAL VALOR R$</text>
<text x="11.00" y="753.8" font-size="11" fill="#f4f4f4" textLength="86.03" lengthAdjust="spacingAndGlyphs">Novo Orçamento</text>
<text x="144.00" y="753.8" font-size="11" fill="#d4d8e2" stroke="#e8e4ec" stroke-width="0.2" textLength="127.01" lengthAdjust="spacingAndGlyphs">F10 - Montar Composição</text>
<text x="297.00" y="753.8" font-size="11" fill="#f4f4f4" textLength="87.05" lengthAdjust="spacingAndGlyphs">Gerar Venda (F9)</text>
<text x="920.00" y="753.8" font-size="11" fill="#f4f4f4" textLength="30.04" lengthAdjust="spacingAndGlyphs">E-mail</text>
<text x="1005.00" y="753.8" font-size="11" fill="#f4f4f4" textLength="43.02" lengthAdjust="spacingAndGlyphs">Canhoto</text>
<text x="1101.50" y="753.8" font-size="11" fill="#f4f4f4" textLength="42.06" lengthAdjust="spacingAndGlyphs">Imprimir</text>
<text x="1202.00" y="753.8" font-size="11" fill="#f4f4f4" textLength="31.09" lengthAdjust="spacingAndGlyphs">Salvar</text>
<text x="1294.00" y="753.8" font-size="11" fill="#f4f4f4" textLength="19.09" lengthAdjust="spacingAndGlyphs">Sair</text>
</svg>
</body></html>
